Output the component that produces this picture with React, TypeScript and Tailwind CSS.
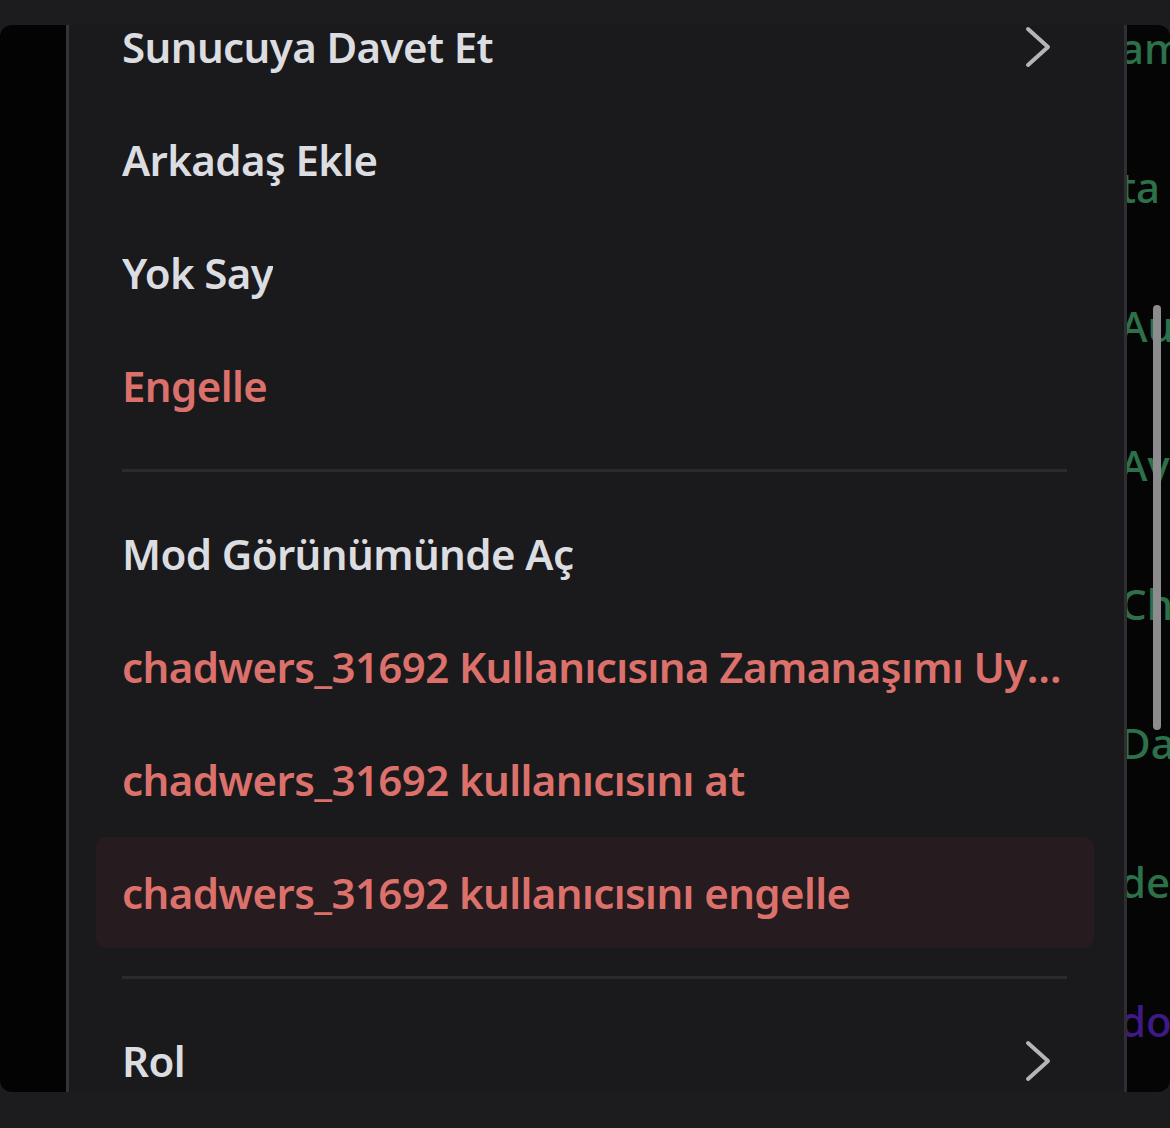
import React from 'react';

type Item =
  | { kind: 'sep' }
  | { kind: 'item'; label: string; danger?: boolean; active?: boolean; submenu?: boolean };

const items: Item[] = [
  { kind: 'item', label: 'Sunucuya Davet Et', submenu: true },
  { kind: 'item', label: 'Arkadaş Ekle' },
  { kind: 'item', label: 'Yok Say' },
  { kind: 'item', label: 'Engelle', danger: true },
  { kind: 'sep' },
  { kind: 'item', label: 'Mod Görünümünde Aç' },
  { kind: 'item', label: 'chadwers_31692 Kullanıcısına Zamanaşımı Uygula', danger: true },
  { kind: 'item', label: 'chadwers_31692 kullanıcısını at', danger: true },
  { kind: 'item', label: 'chadwers_31692 kullanıcısını engelle', danger: true, active: true },
  { kind: 'sep' },
  { kind: 'item', label: 'Rol', submenu: true },
];

// bits of the channel list peeking out behind the menu
const peek = [
  { text: 'am', color: 'text-[#2c7149]' },
  { text: 'ta', color: 'text-[#2c7149]' },
  { text: 'Au', color: 'text-[#2c7149]' },
  { text: 'Av', color: 'text-[#2c7149]' },
  { text: 'Ch', color: 'text-[#2c7149]' },
  { text: 'Da', color: 'text-[#2c7149]' },
  { text: 'de', color: 'text-[#2c7149]' },
  { text: 'do', color: 'text-[#3f1a86]' },
];

const Chevron = () => (
  <svg width="28" height="44" viewBox="0 0 28 44" fill="none" className="shrink-0 mr-[22px]">
    <polyline
      points="4,4 24,22 4,40"
      stroke="#b4b4b9"
      strokeWidth="4"
      strokeLinecap="round"
      strokeLinejoin="round"
    />
  </svg>
);

export default function App() {
  return (
    <div
      className="w-[1170px] h-[1128px] bg-[#1c1c1e] pt-[25px] overflow-hidden"
      style={{ fontFamily: '"Noto Sans", "Open Sans", sans-serif' }}
    >
      <div className="flex h-[1067px] rounded-[12px] overflow-hidden">
        {/* left sidebar */}
        <div className="w-[69px] bg-[#030304] border-r-[3px] border-[#343438]" />

        {/* context menu */}
        <div className="flex-1 bg-[#1a1a1d] overflow-hidden">
          <div className="-mt-[35px]">
            {items.map((it, i) =>
              it.kind === 'sep' ? (
                <div key={i} className="pt-[27px] pb-[25px] ml-[53px] mr-[57px]">
                  <div className="h-[3px] bg-[#2b2b2f]" />
                </div>
              ) : (
                <div key={i} className="h-[113px] py-[1px] ml-[27px] mr-[30px]">
                  <div
                    className={`h-full pl-[26px] pr-[20px] flex items-center justify-between rounded-[10px] ${
                      it.active ? 'bg-[#261b1f]' : ''
                    }`}
                  >
                    <span
                      className={`truncate text-[42px] font-semibold tracking-[-0.6px] ${
                        it.danger ? 'text-[#dc716c]' : 'text-[#dcdde0]'
                      }`}
                    >
                      {it.label}
                    </span>
                    {it.submenu && <Chevron />}
                  </div>
                </div>
              )
            )}
          </div>
        </div>

        {/* channel list behind, with scrollbar */}
        <div className="relative w-[46px] bg-[#050506] border-l-[3px] border-[#2f2f33] overflow-hidden">
          <div className="-mt-[47px] flex flex-col">
            {peek.map((p, i) => (
              <div key={i} className="h-[139px] flex items-center">
                <span className={`-ml-[7px] text-[42px] font-medium whitespace-nowrap ${p.color}`}>
                  {p.text}
                </span>
              </div>
            ))}
          </div>
          <div className="absolute left-[26px] top-[280px] w-[8px] h-[425px] rounded-full bg-[#8c8c8e]" />
        </div>
      </div>
    </div>
  );
}
